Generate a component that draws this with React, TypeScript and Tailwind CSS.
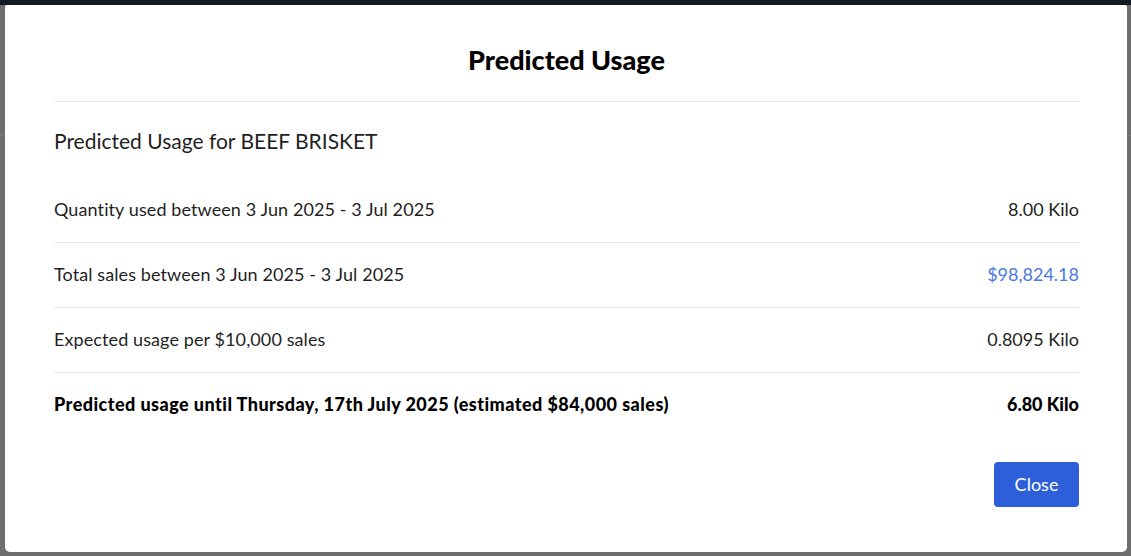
import React from "react";

const rows = [
  { label: "Quantity used between 3 Jun 2025 - 3 Jul 2025", value: "8.00 Kilo" },
  { label: "Total sales between 3 Jun 2025 - 3 Jul 2025", value: "$98,824.18", blue: true },
  { label: "Expected usage per $10,000 sales", value: "0.8095 Kilo" },
];

export default function App() {
  return (
    <div
      className="relative w-[1131px] h-[556px] overflow-hidden bg-[#6e6e6e]"
      style={{ fontFamily: "Lato, 'Noto Sans', sans-serif" }}
    >
      <div className="h-[5px] bg-[#121922]" />
      <div className="flex flex-col pt-[130px]">
        <div className="h-[1px] bg-[#7a7a7a]" />
      </div>
      <div className="absolute left-[5px] top-[5px] w-[1122px] h-[547px] bg-white rounded-[5px] rounded-t-[2px] pl-[49px] pr-[48px] flex flex-col text-[#1f1f1f]">
        <div className="pt-[41px] pb-[27px] border-b border-[#e6e6e6] text-center">
          <h1 className="text-[27px] leading-[28px] font-black text-black">Predicted Usage</h1>
        </div>
        <div className="pt-[27px] pb-[25px] text-[21px] leading-[24px]">Predicted Usage for BEEF BRISKET</div>
        {rows.map((r) => (
          <div
            key={r.label}
            className="flex justify-between items-center pt-[19px] pb-[21px] border-b border-[#e6e6e6] text-[18px] leading-[24px]"
          >
            <span className="tracking-[0.1px]">{r.label}</span>
            <span className={r.blue ? "text-[#4a79e0]" : ""}>{r.value}</span>
          </div>
        ))}
        <div className="flex justify-between items-center pt-[19px] pb-[21px] text-[18px] leading-[24px] font-black text-black">
          <span className="tracking-[0.45px]">Predicted usage until Thursday, 17th July 2025 (estimated $84,000 sales)</span>
          <span>6.80 Kilo</span>
        </div>
        <div className="flex justify-end mt-[25px]">
          <button className="w-[85px] h-[45px] rounded-[4px] bg-[#2c5fd9] text-white text-[18px]">Close</button>
        </div>
      </div>
    </div>
  );
}
